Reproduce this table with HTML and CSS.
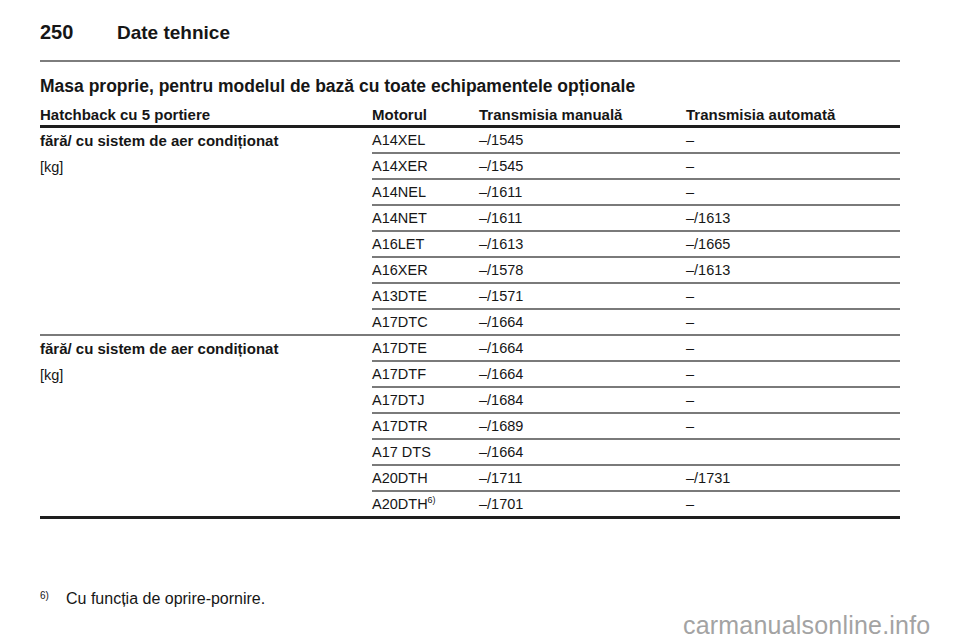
FILE: index.html
```html
<!DOCTYPE html>
<html lang="ro">
<head>
<meta charset="utf-8">
<title>Date tehnice</title>
<link rel="stylesheet" href="styles.css">
</head>
<body>
<div class="page">
  <header class="running-head">
    <span class="page-no">250</span>
    <span class="chapter">Date tehnice</span>
  </header>
  <div class="rule"></div>
  <h2 class="section-title">Masa proprie, pentru modelul de bază cu toate echipamentele opționale</h2>
  <table class="spec">
    <colgroup>
      <col class="c1"><col class="c2"><col class="c3"><col class="c4">
    </colgroup>
    <thead>
      <tr>
        <th>Hatchback cu 5 portiere</th>
        <th>Motorul</th>
        <th>Transmisia manuală</th>
        <th>Transmisia automată</th>
      </tr>
    </thead>
    <tbody>
      <tr>
        <td class="group" rowspan="8"><b>fără/ cu sistem de aer condiționat</b><br>[kg]</td>
        <td>A14XEL</td><td>–/1545</td><td>–</td>
      </tr>
      <tr><td>A14XER</td><td>–/1545</td><td>–</td></tr>
      <tr><td>A14NEL</td><td>–/1611</td><td>–</td></tr>
      <tr><td>A14NET</td><td>–/1611</td><td>–/1613</td></tr>
      <tr><td>A16LET</td><td>–/1613</td><td>–/1665</td></tr>
      <tr><td>A16XER</td><td>–/1578</td><td>–/1613</td></tr>
      <tr><td>A13DTE</td><td>–/1571</td><td>–</td></tr>
      <tr><td>A17DTC</td><td>–/1664</td><td>–</td></tr>
      <tr>
        <td class="group last" rowspan="7"><b>fără/ cu sistem de aer condiționat</b><br>[kg]</td>
        <td>A17DTE</td><td>–/1664</td><td>–</td>
      </tr>
      <tr><td>A17DTF</td><td>–/1664</td><td>–</td></tr>
      <tr><td>A17DTJ</td><td>–/1684</td><td>–</td></tr>
      <tr><td>A17DTR</td><td>–/1689</td><td>–</td></tr>
      <tr><td>A17 DTS</td><td>–/1664</td><td></td></tr>
      <tr><td>A20DTH</td><td>–/1711</td><td>–/1731</td></tr>
      <tr class="last"><td>A20DTH<sup>6)</sup></td><td>–/1701</td><td>–</td></tr>
    </tbody>
  </table>
  <p class="footnote"><sup class="fn-mark">6)</sup><span>Cu funcția de oprire-pornire.</span></p>
</div>
<div class="watermark">carmanualsonline.info</div>
</body>
</html>
```
FILE: styles.css
```css
html, body {
  margin: 0;
  padding: 0;
  background: #ffffff;
}
body {
  font-family: "Liberation Sans", Arial, sans-serif;
  color: #161616;
  width: 960px;
  height: 642px;
  overflow: hidden;
  position: relative;
}
.page {
  padding: 20px 60px 0 40px;
}
.running-head {
  display: flex;
  align-items: baseline;
  height: 24px;
  line-height: 24px;
  font-size: 20px;
  font-weight: bold;
}
.page-no {
  width: 77px;
}
.chapter {
  font-size: 19px;
}
.rule {
  margin-top: 16px;
  height: 2px;
  background: #7d7d7d;
}
.section-title {
  margin: 13px 0 0;
  font-size: 17.5px;
  line-height: 22px;
  font-weight: bold;
}
.spec {
  width: 860px;
  border-collapse: separate;
  border-spacing: 0;
  table-layout: fixed;
  font-size: 14.5px;
}
.c1 { width: 332px; }
.c2 { width: 107px; }
.c3 { width: 207px; }
.c4 { width: 214px; }
.spec th {
  text-align: left;
  font-weight: bold;
  font-size: 15px;
  padding: 8px 0 0;
  line-height: 20px;
  border-bottom: 3px solid #1e1e1e;
  white-space: nowrap;
}
.spec td {
  padding: 0;
  line-height: 24px;
  height: 24px;
  border-bottom: 2px solid #7a7a7a;
  vertical-align: top;
  white-space: nowrap;
}
.spec td.group {
  line-height: 26px;
}
.spec td.group b {
  font-size: 15px;
}
.spec tr.last td,
.spec td.group.last {
  border-bottom: 3px solid #1e1e1e;
}
.spec sup {
  font-size: 9px;
  line-height: 0;
  vertical-align: 6px;
}
.footnote {
  margin: 70px 0 0;
  font-size: 16px;
  line-height: 20px;
  display: flex;
}
.footnote .fn-mark {
  width: 26px;
  font-size: 10px;
  line-height: 14px;
  vertical-align: top;
}
.watermark {
  position: absolute;
  left: 683px;
  top: 610px;
  font-size: 25px;
  line-height: 30px;
  color: #a3a3a3;
  letter-spacing: 0.2px;
}
```
